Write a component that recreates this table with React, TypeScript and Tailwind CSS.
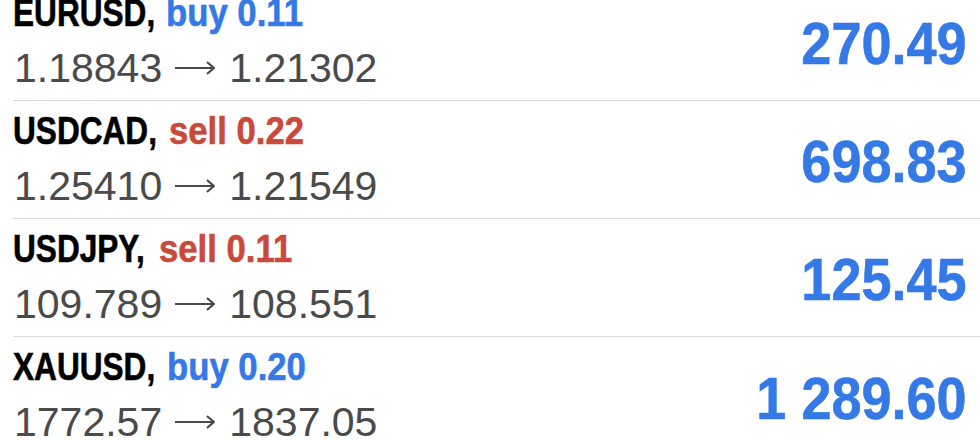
import React from "react";

type Row = {
  sym: string;
  symW: string;
  side: "buy" | "sell";
  vol: string;
  from: string;
  to: string;
  profit: string;
};

const rows: Row[] = [
  { sym: "EURUSD,", symW: "w-[153px]", side: "buy", vol: "0.11", from: "1.18843", to: "1.21302", profit: "270.49" },
  { sym: "USDCAD,", symW: "w-[156px]", side: "sell", vol: "0.22", from: "1.25410", to: "1.21549", profit: "698.83" },
  { sym: "USDJPY,", symW: "w-[146px]", side: "sell", vol: "0.11", from: "109.789", to: "108.551", profit: "125.45" },
  { sym: "XAUUSD,", symW: "w-[154px]", side: "buy", vol: "0.20", from: "1772.57", to: "1837.05", profit: "1 289.60" },
];

const font = { fontFamily: "'Liberation Sans', Arial, Helvetica, sans-serif" };

function Arrow() {
  return (
    <svg width="40" height="16" viewBox="0 0 40 16" className="ml-[13px] mr-[14px] shrink-0">
      <path d="M0 8 H38.5" stroke="#4a4a4a" strokeWidth="2.2" fill="none" />
      <path d="M32 2 L38.8 8 L32 14" stroke="#4a4a4a" strokeWidth="2.2" fill="none" strokeLinejoin="miter" />
    </svg>
  );
}

export default function App() {
  return (
    <div className="w-[980px] h-[440px] overflow-hidden bg-white" style={font}>
      <div className="-mt-[17px] pl-[13px]">
        {rows.map((r, i) => (
          <div
            key={i}
            className={`flex h-[118px] ${i < rows.length - 1 ? "border-b border-[#d9d9d9]" : ""}`}
          >
            <div className="flex-1 flex flex-col pt-[8px]">
              <div className="flex h-[44px] items-start text-[39px] leading-[44px] font-bold whitespace-nowrap [-webkit-text-stroke:0.6px]">
                <div className={`${r.symW} shrink-0`}>
                  <span className="inline-block origin-left scale-x-[0.81] text-black">{r.sym}</span>
                </div>
                <span
                  className={`inline-block origin-left scale-x-[0.89] ${
                    r.side === "buy" ? "text-[#3479e5]" : "text-[#c9493b]"
                  }`}
                >
                  {r.side} {r.vol}
                </span>
              </div>
              <div className="flex items-center mt-[10px] ml-[1px] h-[46px] text-[41px] leading-[46px] text-[#4a4a4a] whitespace-nowrap">
                <span>{r.from}</span>
                <Arrow />
                <span>{r.to}</span>
              </div>
            </div>
            <div className="flex items-center pr-[13px] pt-[5px]">
              <span className="inline-block origin-right scale-x-[0.9] text-[60px] leading-[60px] font-bold text-[#3479e5] whitespace-nowrap [-webkit-text-stroke:0.6px]">
                {r.profit}
              </span>
            </div>
          </div>
        ))}
      </div>
    </div>
  );
}
